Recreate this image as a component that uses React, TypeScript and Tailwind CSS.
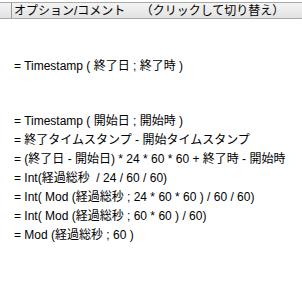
const lines = [
  "= Timestamp ( 開始日 ; 開始時 )",
  "= 終了タイムスタンプ - 開始タイムスタンプ",
  "= (終了日 - 開始日) * 24 * 60 * 60 + 終了時 - 開始時",
  "= Int(経過総秒  / 24 / 60 / 60)",
  "= Int( Mod (経過総秒 ; 24 * 60 * 60 ) / 60 / 60)",
  "= Int( Mod (経過総秒 ; 60 * 60 ) / 60)",
  "= Mod (経過総秒 ; 60 )",
];

export default function App() {
  return (
    <div
      className="h-[283px] w-[302px] overflow-hidden bg-white text-black"
      style={{ fontFamily: '"Liberation Sans", "Noto Sans CJK JP", sans-serif' }}
    >
      <div className="mt-[2px] flex h-[17px] items-center border-y border-y-[#a9a9a9] bg-gradient-to-b from-[#f4f4f4] to-[#e2e2e2]">
        <div className="ml-[11px] h-full border-l border-[#9a9a9a]" />
        <span className="ml-[2px] whitespace-pre text-[12px] leading-none">
          オプション/コメント　 （クリックして切り替え）
        </span>
      </div>
      <div className="px-[14px] text-[12px] leading-[19px]">
        <div className="mt-[38px]">= Timestamp ( 終了日 ; 終了時 )</div>
        <div className="mt-[36px] flex flex-col">
          {lines.map((l) => (
            <div key={l} className="whitespace-pre">
              {l}
            </div>
          ))}
        </div>
      </div>
    </div>
  );
}
